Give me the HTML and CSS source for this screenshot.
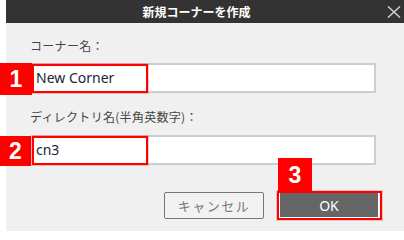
FILE: index.html
```html
<!DOCTYPE html>
<html lang="ja">
<head>
<meta charset="utf-8">
<link rel="stylesheet" href="styles.css">
</head>
<body>
<div class="dialog">
  <div class="header">
    <div class="title">新規コーナーを作成</div>
    <svg class="close" width="14" height="12" viewBox="0 0 14 12"><path d="M1 0.5 L13 11.5 M13 0.5 L1 11.5" stroke="#d6d6d6" stroke-width="1.4" fill="none"/></svg>
  </div>
  <div class="body">
    <div class="label">コーナー名：</div>
    <div class="field first">
      <div class="input">New Corner</div>
      <div class="mark-box"></div>
      <div class="badge b1">1</div>
    </div>
    <div class="label second">ディレクトリ名(半角英数字)：</div>
    <div class="field">
      <div class="input">cn3</div>
      <div class="mark-box"></div>
      <div class="badge b2">2</div>
    </div>
    <div class="buttons">
      <div class="btn cancel">キャンセル</div>
      <div class="ok-wrap">
        <div class="btn ok">OK</div>
        <div class="ok-box"></div>
        <div class="badge b3">3</div>
      </div>
    </div>
  </div>
</div>
</body>
</html>
```

FILE: styles.css
```css
html, body {
  margin: 0;
  padding: 0;
  background: #ffffff;
}
.dialog {
  margin-left: 6px;
  width: 398px;
  height: 231px;
  background: #f0f0f0;
  font-family: "Noto Sans CJK JP", sans-serif;
}
.header {
  height: 23px;
  background: #333333;
  display: flex;
  align-items: center;
  padding-right: 17px;
  position: relative;
}
.title {
  flex: 1;
  text-align: center;
  color: #ffffff;
  font-weight: bold;
  font-size: 12px;
  line-height: 23px;
}
.close {
  position: absolute;
  right: 3px;
  top: 6px;
}
.body {
  padding: 15px 0 0 24px;
}
.label {
  font-size: 12px;
  line-height: 16px;
  color: #444444;
  letter-spacing: 0.3px;
}
.label.second {
  margin-top: 16px;
}
.field {
  position: relative;
  margin: 9px 0 0 2px;
  width: 344px;
  height: 30px;
}
.field + .label {
  margin-top: 16px;
}
.label.second + .field {
  margin-top: 10px;
}
.input {
  box-sizing: border-box;
  width: 344px;
  height: 30px;
  background: #ffffff;
  border: 2px solid #cdcdcd;
  padding-left: 2px;
  font-family: "Noto Sans", "Noto Sans CJK JP", sans-serif;
  font-size: 14px;
  line-height: 26px;
  color: #1e1e36;
}
.mark-box {
  position: absolute;
  left: 0;
  top: 1px;
  width: 116px;
  height: 29px;
  box-sizing: border-box;
  border: 2px solid #ff0000;
  box-shadow: 0 0 0 1px rgba(255, 80, 80, 0.35);
}
.badge {
  position: absolute;
  background: #ff0000;
  color: #ffffff;
  font-family: "Liberation Sans", Arial, sans-serif;
  font-weight: bold;
  font-size: 23px;
  display: flex;
  align-items: center;
  justify-content: center;
}
.b1 {
  left: -32px;
  top: 0;
  width: 32px;
  height: 32px;
}
.b2 {
  left: -32px;
  top: 1px;
  width: 31px;
  height: 30px;
}
.buttons {
  display: flex;
  justify-content: flex-end;
  gap: 15px;
  margin-top: 27px;
  padding-right: 25px;
}
.btn {
  box-sizing: border-box;
  width: 100px;
  height: 27px;
  display: flex;
  align-items: center;
  justify-content: center;
  border-radius: 2px;
}
.cancel {
  border: 1px solid #777777;
  color: #777777;
  font-size: 13px;
  letter-spacing: 1.5px;
  background: #f2f2f2;
}
.ok-wrap {
  position: relative;
}
.ok {
  background: #666666;
  color: #ffffff;
  font-family: "Noto Sans", sans-serif;
  font-size: 14px;
  border-radius: 0;
  box-shadow: inset 0 0 0 1px #ffffff;
  height: 26px;
  margin-top: 0;
}
.ok-box {
  position: absolute;
  left: -2px;
  top: -1px;
  width: 105px;
  height: 29px;
  box-sizing: border-box;
  border: 2px solid #ff0000;
  box-shadow: 0 0 0 1px rgba(255, 80, 80, 0.3);
}
.b3 {
  left: -1px;
  top: -34px;
  width: 34px;
  height: 34px;
}
```
